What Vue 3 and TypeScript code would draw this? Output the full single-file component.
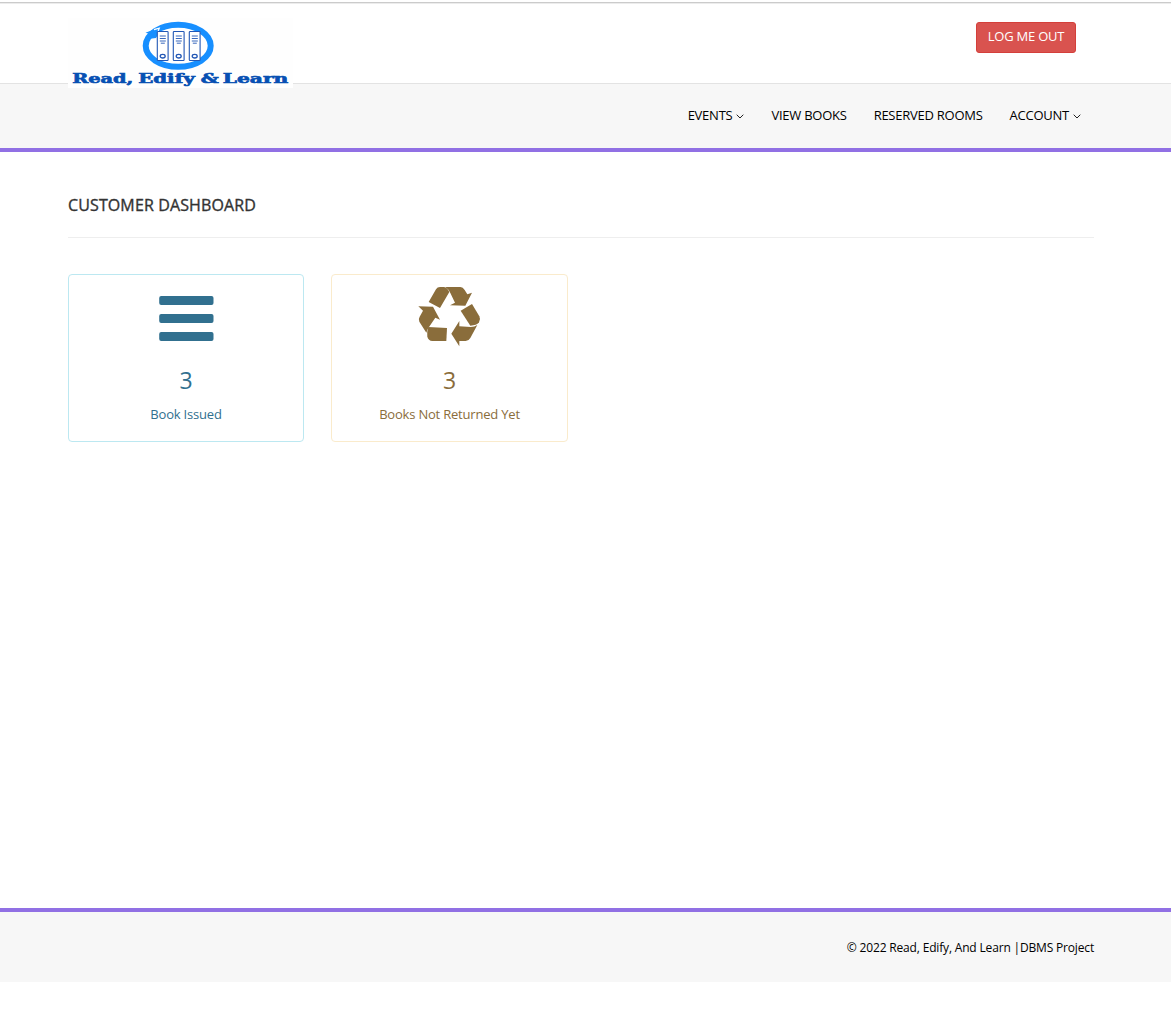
<script setup lang="ts">
interface NavItem {
  label: string
  menu: boolean
}

interface Stat {
  kind: 'issued' | 'pending'
  count: number
  label: string
}

interface Word {
  text: string
  x: number
  width: number
}

const navItems: NavItem[] = [
  { label: 'EVENTS', menu: true },
  { label: 'VIEW BOOKS', menu: false },
  { label: 'RESERVED ROOMS', menu: false },
  { label: 'ACCOUNT', menu: true },
]

const stats: Stat[] = [
  { kind: 'issued', count: 3, label: 'Book Issued' },
  { kind: 'pending', count: 3, label: 'Books Not Returned Yet' },
]

const binders: number[] = [88.8, 104.8, 120.8]

const wordmark: Word[] = [
  { text: 'Read,', x: 4.2, width: 61 },
  { text: 'Edify', x: 70.2, width: 56.5 },
  { text: '&', x: 132.8, width: 18 },
  { text: 'Learn', x: 154.8, width: 65.5 },
]
</script>

<template>
  <div class="page">
    <header class="topbar">
      <a class="brand">
        <svg class="logo" width="225" height="70" viewBox="0 0 225 70">
          <ellipse cx="110.2" cy="27.8" rx="32.5" ry="21" fill="#fff" stroke="#178fff" stroke-width="6" />
          <path d="M77.5 14.8L91 9.5L93 12L88 20L80 21L82 16Z" fill="#178fff" />
          <path d="M86 11.6L91.3 10.2L89.6 14.6" fill="none" stroke="#fff" stroke-width="1.2" />
          <g v-for="x in binders" :key="x" :transform="`translate(${x} 13)`" fill="none" stroke="#2257b5">
            <rect x="0.5" y="0.5" width="10.8" height="29" rx="0.8" fill="#fff" stroke-width="1.1" />
            <path d="M3 5h6M3 7.5h6M3 10h6M4 12.2h4" stroke-width="0.9" />
            <ellipse cx="5.9" cy="25.2" rx="2.5" ry="1.8" stroke-width="1.3" />
          </g>
          <text
            v-for="word in wordmark"
            :key="word.text"
            class="wordmark"
            :x="word.x"
            y="64.7"
            :textLength="word.width"
            lengthAdjust="spacingAndGlyphs"
          >{{ word.text }}</text>
        </svg>
      </a>
      <button class="logout" type="button">LOG ME OUT</button>
    </header>

    <nav class="menu">
      <a v-for="item in navItems" :key="item.label" class="menu-item">
        {{ item.label }}
        <svg v-if="item.menu" class="caret" width="8" height="5" viewBox="0 0 8 5">
          <path d="M0.7 0.7L4 4L7.3 0.7" fill="none" stroke="#222" stroke-width="1" />
        </svg>
      </a>
    </nav>

    <main class="content">
      <h4 class="title">CUSTOMER DASHBOARD</h4>
      <div class="cards">
        <section v-for="stat in stats" :key="stat.kind" class="card" :class="stat.kind">
          <svg v-if="stat.kind === 'issued'" class="icon" width="80" height="72" viewBox="0 0 80 72" fill="currentColor">
            <rect x="13.2" y="16" width="54.3" height="9" rx="2" />
            <rect x="13.2" y="34" width="54.3" height="9" rx="2" />
            <rect x="13.2" y="52" width="54.3" height="9" rx="2" />
          </svg>
          <svg v-else class="icon" width="80" height="72" viewBox="1 0 240 216" fill="currentColor">
            <path d="M57 66L79 28Q83 21 91 21H103Q113 23 119 36L91 84Z" />
            <path d="M107 21H152Q160 21 165 30L173 43L187 38L167 77L121 76L136 68L122 39Q116 27 107 21Z" />
            <path d="M153 92L187 72L209 109Q214 118 208 127Q201 137 182 137Z" />
            <path d="M125 161L149 123V139L183 141Q195 141 203 135L182 174Q177 183 168 183H149V199Z" />
            <path d="M56 141L112 144L110 183H68Q56 182 53 170Q51 155 56 141Z" />
            <path d="M26 79L70 80L91 119L77 113L60 138Q53 147 50 158L29 125Q25 118 30 110L40 92Z" />
          </svg>
          <div class="count">{{ stat.count }}</div>
          <div class="label">{{ stat.label }}</div>
        </section>
      </div>
    </main>

    <footer class="footer">© 2022 Read, Edify, And Learn |DBMS Project</footer>
  </div>
</template>

<style>
body {
  margin: 0;
  background: #fff;
}
</style>

<style scoped>
.page {
  height: 1023px;
  display: flex;
  flex-direction: column;
  font-family: 'Open Sans', sans-serif;
  font-size: 13px;
  line-height: 18px;
  color: #000;
}

.topbar {
  box-sizing: border-box;
  height: 84px;
  flex: none;
  display: flex;
  justify-content: space-between;
  align-items: flex-start;
  padding: 16px 95px 0 68px;
  border-top: 2px solid #fff;
  border-bottom: 1px solid #e3e3e3;
  box-shadow: inset 0 1px #cbcbcb, inset 0 2px #ececec;
}

.brand {
  position: relative;
  z-index: 1;
  height: 70px;
}

.logo {
  display: block;
  background: #fefefe;
}

.wordmark {
  font: bold 12px 'DejaVu Serif', serif;
  fill: #0750b3;
  stroke: #0750b3;
  stroke-width: 0.6px;
}

.logout {
  box-sizing: border-box;
  width: 100px;
  height: 31px;
  margin-top: 4px;
  padding: 0 0 3px;
  border: 1px solid #d43f3a;
  border-radius: 3px;
  background: #d9534f;
  color: #fff;
  font: 13px 'Open Sans', sans-serif;
  letter-spacing: -0.22px;
  white-space: nowrap;
}

.menu {
  box-sizing: border-box;
  height: 68px;
  flex: none;
  display: flex;
  justify-content: flex-end;
  gap: 27px;
  padding: 22px 90px 0 0;
  background: #f7f7f7;
  border-bottom: 4px solid #9170e4;
}

.menu-item {
  display: flex;
  align-items: center;
  height: 18px;
  letter-spacing: -0.25px;
  white-space: nowrap;
}

.caret {
  margin: 2px 0 0 4px;
}

.content {
  flex: none;
  box-sizing: border-box;
  height: 756px;
  padding: 42px 77px 0 68px;
}

.title {
  margin: 0;
  height: 43px;
  border-bottom: 1px solid #eee;
  font-size: 16px;
  line-height: 22px;
  font-weight: 400;
  letter-spacing: 0.12px;
  color: #333;
  -webkit-text-stroke: 0.35px #333;
}

.cards {
  display: flex;
  gap: 27px;
  margin-top: 36px;
}

.card {
  box-sizing: border-box;
  width: 236px;
  height: 168px;
  display: flex;
  flex-direction: column;
  align-items: center;
  padding-top: 5px;
  border: 1px solid;
  border-radius: 4px;
}

.issued {
  border-color: #bce8f1;
  color: #31708f;
}

.pending {
  width: 237px;
  border-color: #faebcc;
  color: #8a6d3b;
}

.count {
  margin-top: 15px;
  font-size: 23px;
  line-height: 26px;
}

.label {
  margin-top: 12px;
  letter-spacing: -0.2px;
}

.footer {
  box-sizing: border-box;
  height: 74px;
  flex: none;
  padding: 27px 77px 0 0;
  border-top: 4px solid #9170e4;
  background: #f7f7f7;
  font-size: 12px;
  letter-spacing: -0.17px;
  text-align: right;
}
</style>
